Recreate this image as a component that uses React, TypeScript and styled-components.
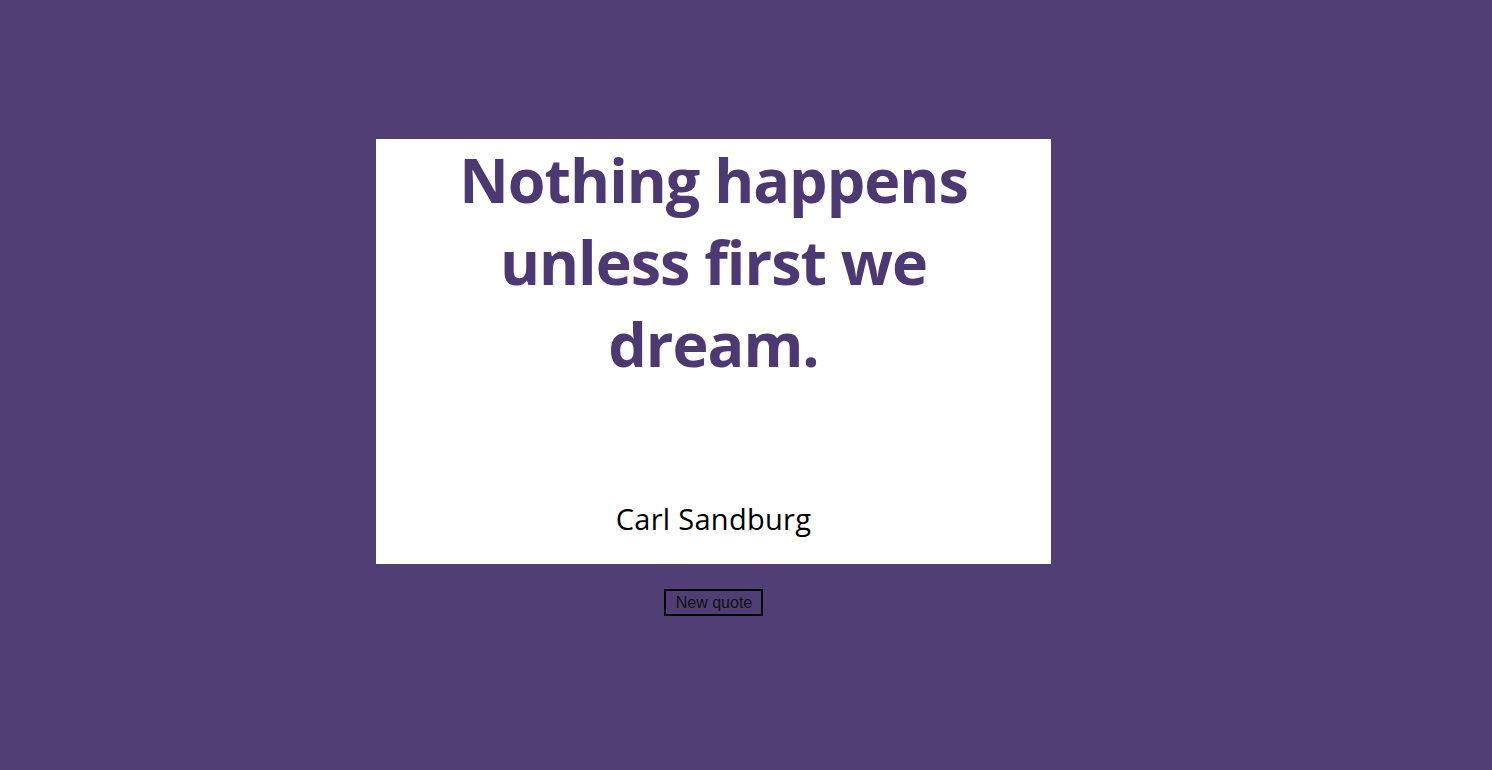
import React from "react";
import styled, { createGlobalStyle } from "styled-components";

const Global = createGlobalStyle`
  html, body { margin: 0; padding: 0; background: #513e74; }
  body { min-height: 770px; }
`;

const Page = styled.div`
  min-height: 770px;
  background: #513e74;
  padding: 139px 0 0 376px;
  box-sizing: border-box;
`;

const Column = styled.div`
  width: 675px;
  display: flex;
  flex-direction: column;
  align-items: center;
`;

const Card = styled.div`
  width: 100%;
  height: 425px;
  background: #ffffff;
  display: flex;
  flex-direction: column;
  align-items: center;
  box-sizing: border-box;
`;

const Quote = styled.h1`
  margin: 0;
  padding: 0 60px;
  font-family: "Open Sans", "Noto Sans", sans-serif;
  font-weight: 700;
  font-size: 61px;
  line-height: 82px;
  color: #4c3973;
  text-align: center;
  letter-spacing: -1px;
`;

const Author = styled.p`
  margin: auto 0 25px;
  font-family: "Open Sans", "Noto Sans", sans-serif;
  font-size: 29px;
  line-height: 40px;
  letter-spacing: 0.3px;
  color: #000;
`;

const Button = styled.button`
  margin-top: 25px;
  font-family: "Liberation Sans", Arial, sans-serif;
  font-size: 16px;
  line-height: 19px;
  padding: 2px 9px 2px 10px;
  border: 2px solid #000;
  background: transparent;
  color: #111;
  cursor: pointer;
`;

export default function App() {
  return (
    <>
      <Global />
      <Page>
        <Column>
          <Card>
            <Quote>Nothing happens unless first we dream.</Quote>
            <Author>Carl Sandburg</Author>
          </Card>
          <Button>New quote</Button>
        </Column>
      </Page>
    </>
  );
}
